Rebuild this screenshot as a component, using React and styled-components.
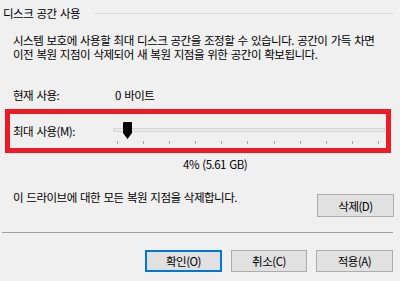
import React from 'react';
import styled, { createGlobalStyle } from 'styled-components';

const GlobalStyle = createGlobalStyle`
  html, body {
    margin: 0;
    padding: 0;
    background-color: #f0f0f0;
  }
  body {
    font-family: "Noto Sans CJK KR", "Noto Sans", sans-serif;
    font-size: 11.5px;
    letter-spacing: -0.5px;
    word-spacing: 1.2px;
    color: #000;
  }
`;

const Page = styled.div`
  width: 400px;
  height: 281px;
  box-sizing: border-box;
  padding-top: 5px;
  overflow: hidden;
`;

const GroupHeader = styled.div`
  display: flex;
  align-items: center;
  height: 16px;
  padding: 0 7px 0 3px;
`;

const GroupTitle = styled.span`
  line-height: 16px;
  white-space: nowrap;
`;

const GroupLine = styled.div`
  flex: 1;
  margin-left: 15px;
  border-top: 1px solid #dcdcdc;
`;

const Description = styled.p`
  margin: 12px 0 0 13px;
  line-height: 14px;
  white-space: nowrap;
`;

const InfoRow = styled.div`
  display: flex;
  margin: ${(p) => p.$top || 0}px 0 0 13px;
  line-height: 16px;
`;

const InfoLabel = styled.span`
  width: ${(p) => p.$width}px;
  flex-shrink: 0;
`;

const Highlight = styled.div`
  display: flex;
  align-items: flex-start;
  margin: 6px 0 0 5px;
  width: 386px;
  height: 44px;
  box-sizing: border-box;
  border: 5px solid #ed1c24;
  padding-left: 3px;
`;

const SliderLabel = styled.span`
  width: 100px;
  flex-shrink: 0;
  margin-top: 9px;
  line-height: 16px;
`;

const Slider = styled.div`
  position: relative;
  width: 272px;
  height: 34px;
  padding-top: 14px;
  box-sizing: border-box;
`;

const Track = styled.div`
  height: 4px;
  box-sizing: border-box;
  background-color: #e7eaea;
  border: 1px solid #d6d6d6;
`;

const Ticks = styled.div`
  display: flex;
  justify-content: space-between;
  margin: 9px 6px 0 4px;
`;

const Tick = styled.span`
  width: 1px;
  height: 3px;
  background-color: #a8a8a8;
`;

const Thumb = styled.svg`
  position: absolute;
  left: ${(p) => p.$left}px;
  top: 8px;
`;

const Percent = styled.div`
  margin: 3px 0 0 183px;
  line-height: 16px;
`;

const DeleteRow = styled.div`
  display: flex;
  justify-content: space-between;
  align-items: flex-start;
  margin-top: 17px;
  padding: 0 6px 0 13px;
`;

const DeleteText = styled.span`
  line-height: 16px;
`;

const Button = styled.button`
  font: inherit;
  letter-spacing: inherit;
  word-spacing: inherit;
  color: #000;
  width: ${(p) => p.$width || 77}px;
  height: ${(p) => p.$height || 22}px;
  margin-top: ${(p) => p.$top || 0}px;
  padding: 0;
  background-color: #e1e1e1;
  border: ${(p) => (p.$default ? '2px solid #0078d7' : '1px solid #adadad')};
  box-sizing: border-box;
  line-height: 16px;
`;

const Separator = styled.div`
  margin: 15px 7px 0 2px;
  border-top: 1px solid #a0a0a0;
`;

const ButtonBar = styled.div`
  display: flex;
  justify-content: flex-end;
  gap: 9px;
  margin-top: 17px;
  padding-right: 7px;
`;

const ticks = Array.from({ length: 11 });
const percent = 4;

export default function App() {
  // thumb centre sits on the tick line (117..379 on the page, 4..266 in the slider)
  const thumbLeft = 4 + (262 * percent) / 100 - 4.5;
  return (
    <>
      <GlobalStyle />
      <Page>
        <GroupHeader>
          <GroupTitle>디스크 공간 사용</GroupTitle>
          <GroupLine />
        </GroupHeader>
        <Description>
          시스템 보호에 사용할 최대 디스크 공간을 조정할 수 있습니다. 공간이 가득 차면
          <br />
          이전 복원 지점이 삭제되어 새 복원 지점을 위한 공간이 확보됩니다.
        </Description>
        <InfoRow $top={26}>
          <InfoLabel $width={102}>현재 사용:</InfoLabel>
          <span>0 바이트</span>
        </InfoRow>
        <Highlight>
          <SliderLabel>최대 사용(M):</SliderLabel>
          <Slider>
            <Track />
            <Ticks>
              {ticks.map((_, i) => (
                <Tick key={i} />
              ))}
            </Ticks>
            <Thumb $left={thumbLeft} width="9" height="17" viewBox="0 0 9 17">
              <path d="M1 0 H8 Q9 0 9 1 V11 L4.5 17 L0 11 V1 Q0 0 1 0 Z" fill="#000" />
            </Thumb>
          </Slider>
        </Highlight>
        <Percent>{percent}% (5.61 GB)</Percent>
        <DeleteRow>
          <DeleteText>이 드라이브에 대한 모든 복원 지점을 삭제합니다.</DeleteText>
          <Button $top={5} $height={23}>삭제(D)</Button>
        </DeleteRow>
        <Separator />
        <ButtonBar>
          <Button $default>확인(O)</Button>
          <Button $width={76}>취소(C)</Button>
          <Button>적용(A)</Button>
        </ButtonBar>
      </Page>
    </>
  );
}
